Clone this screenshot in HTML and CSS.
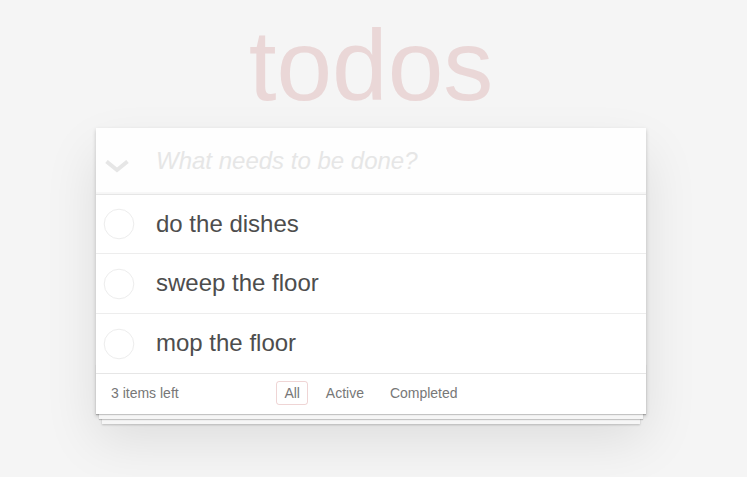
FILE: index.html
```html
<!DOCTYPE html>
<html lang="en">
<head>
<meta charset="utf-8">
<title>TodoMVC</title>
<link rel="stylesheet" href="styles.css">
</head>
<body>
<div class="page">
  <h1 class="title">todos</h1>
  <section class="todoapp">
    <header class="header">
      <label class="toggle-all" aria-label="Mark all as complete">
        <svg width="24" height="13" viewBox="0 0 24 13"><polyline points="1.5,1.5 12,10 22.5,1.5" fill="none" stroke="#e6e6e6" stroke-width="4"/></svg>
      </label>
      <input class="new-todo" placeholder="What needs to be done?">
    </header>
    <ul class="todo-list">
      <li class="todo">
        <span class="toggle"><svg width="32" height="32" viewBox="0 0 32 32"><circle cx="16" cy="16" r="14.8" fill="none" stroke="#ededed" stroke-width="1"/></svg></span>
        <label class="todo-label">do the dishes</label>
      </li>
      <li class="todo">
        <span class="toggle"><svg width="32" height="32" viewBox="0 0 32 32"><circle cx="16" cy="16" r="14.8" fill="none" stroke="#ededed" stroke-width="1"/></svg></span>
        <label class="todo-label">sweep the floor</label>
      </li>
      <li class="todo">
        <span class="toggle"><svg width="32" height="32" viewBox="0 0 32 32"><circle cx="16" cy="16" r="14.8" fill="none" stroke="#ededed" stroke-width="1"/></svg></span>
        <label class="todo-label">mop the floor</label>
      </li>
    </ul>
    <footer class="footer">
      <span class="todo-count">3 items left</span>
      <ul class="filters">
        <li><a class="filter selected" href="#/">All</a></li>
        <li><a class="filter" href="#/active">Active</a></li>
        <li><a class="filter" href="#/completed">Completed</a></li>
      </ul>
      <span></span>
    </footer>
  </section>
</div>
</body>
</html>
```
FILE: styles.css
```css
html {
  margin: 0;
  padding: 0;
  background: #f5f5f5;
}

body {
  margin: 0;
  padding: 0;
  min-height: 100vh;
  font: 14px "Liberation Sans", Arial, sans-serif;
  line-height: 1.4em;
  color: #4d4d4d;
  font-weight: 300;
}

.page {
  width: 550px;
  margin: 0 auto;
  padding-right: 5px;
}

.title {
  margin: 0 0 13px 0;
  padding-top: 15px;
  height: 100px;
  font-size: 100px;
  line-height: 100px;
  font-weight: 100;
  text-align: center;
  color: rgba(175, 47, 47, 0.15);
}

.todoapp {
  background: #fff;
  position: relative;
  margin-bottom: 40px;
  box-shadow: 0 2px 4px 0 rgba(0, 0, 0, 0.2), 0 25px 50px 0 rgba(0, 0, 0, 0.1);
}

.header {
  display: flex;
  background: rgba(0, 0, 0, 0.003);
  box-shadow: inset 0 -2px 1px rgba(0, 0, 0, 0.03);
}

.toggle-all {
  width: 60px;
  flex: none;
  box-sizing: border-box;
  padding: 32px 0 0 9px;
  display: flex;
  align-items: flex-start;
}

.new-todo {
  flex: 1;
  min-width: 0;
  margin: 0;
  border: none;
  outline: none;
  background: transparent;
  font-family: inherit;
  font-weight: inherit;
  font-size: 24px;
  line-height: 1.4em;
  height: 65.6px;
  box-sizing: border-box;
  padding: 16px 16px 16px 0;
  color: inherit;
}

.new-todo::placeholder {
  font-style: italic;
  font-weight: 300;
  color: #e6e6e6;
}

.todo-list {
  margin: 0;
  padding: 0;
  list-style: none;
  border-top: 1px solid #e6e6e6;
}

.todo {
  display: flex;
  align-items: center;
  font-size: 24px;
  border-bottom: 1px solid #ededed;
}

.todo:last-child {
  border-bottom: none;
}

.toggle {
  width: 60px;
  flex: none;
  display: flex;
  align-items: center;
  padding-left: 7px;
  box-sizing: border-box;
}

.toggle svg {
  display: block;
}

.todo-label {
  display: block;
  padding: 15px 15px 15px 0;
  line-height: 1.2;
  white-space: pre-line;
}

.footer {
  position: relative;
  color: #777;
  padding: 10px 15px;
  height: 20px;
  border-top: 1px solid #e6e6e6;
  display: grid;
  grid-template-columns: 1fr auto 1fr;
  align-items: start;
}

.footer::before {
  content: '';
  position: absolute;
  right: 0;
  bottom: 0;
  left: 0;
  height: 50px;
  overflow: hidden;
  box-shadow: 0 1px 1px rgba(0, 0, 0, 0.2),
              0 8px 0 -3px #f6f6f6,
              0 9px 1px -3px rgba(0, 0, 0, 0.2),
              0 16px 0 -6px #f6f6f6,
              0 17px 2px -6px rgba(0, 0, 0, 0.2);
}

.todo-count {
  text-align: left;
}

.filters {
  margin: 0;
  padding: 0;
  list-style: none;
}

.filters li {
  display: inline;
}

.filter {
  color: inherit;
  margin: 3px;
  padding: 3px 7px;
  text-decoration: none;
  border: 1px solid transparent;
  border-radius: 3px;
}

.filter.selected {
  border-color: rgba(175, 47, 47, 0.2);
}
```
